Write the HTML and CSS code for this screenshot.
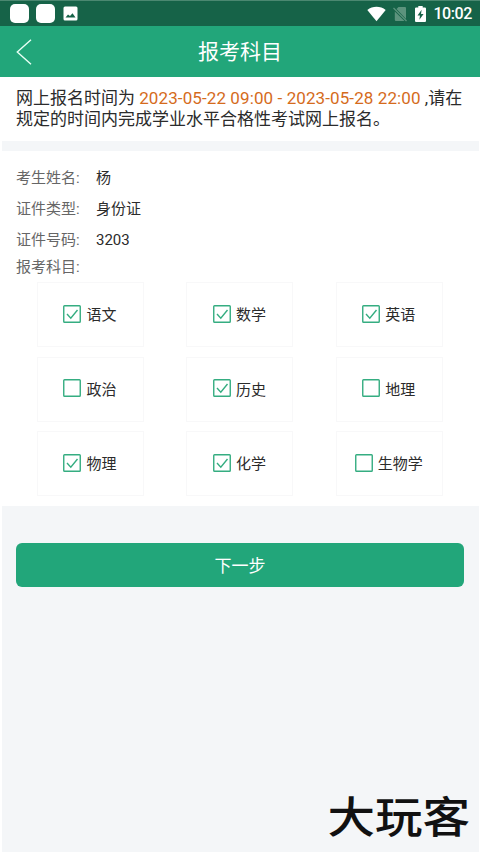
FILE: index.html
```html
<!DOCTYPE html>
<html lang="zh-CN">
<head>
<meta charset="utf-8">
<title>报考科目</title>
<link rel="stylesheet" href="styles.css">
</head>
<body>
<div class="status">
  <i class="app"></i><i class="app"></i>
  <svg class="photo" width="15" height="15" viewBox="0 0 15 15"><rect x=".5" y=".5" width="14" height="14" rx="1.5" fill="#fff"/><path d="M2.500 11.500L5 8.500l2 1.500 2.500-2.800 3 4.300z" fill="#166348"/></svg>
  <div class="tray">
    <svg width="19" height="16" viewBox="0 0 19 16"><path d="M.3 4C5.500-.2 13.500-.2 18.700 4L9.500 15.300z" fill="#fff"/></svg>
    <svg class="sim" width="14" height="16" viewBox="0 0 14 16"><path d="M5.500 1H12q1 0 1 1v11L3.500 3zM1.800 5.500L11.500 15H3q-1.200 0-1.200-1.200z" fill="#5c937d"/><path d="M.5 2l13 13" stroke="#5c937d" stroke-width="1.200"/></svg>
    <svg class="battery" width="11" height="16" viewBox="0 0 10 16" preserveAspectRatio="none"><path d="M3 0h4v1.500h2q1 0 1 1V15q0 1-1 1H1q-1 0-1-1V2.500q0-1 1-1h2z" fill="#fff"/><path d="M6 3.800L2.300 9.500h2.200L4 13.800 7.800 8H5.500z" fill="#166348"/></svg>
    <span class="clock">10:02</span>
  </div>
</div>
<header class="bar">
  <svg class="back" width="16" height="26" viewBox="0 0 16 26"><path d="M15 .8L1.300 13 15 25.200" fill="none" stroke="#e8fff5" stroke-width="1.400"/></svg>
  <h1>报考科目</h1>
</header>
<main>
  <p class="notice">网上报名时间为 <span class="period">2023-05-22 09:00 - 2023-05-28 22:00</span> ,请在<br>规定的时间内完成学业水平合格性考试网上报名。</p>
  <section class="form">
    <dl>
      <dt>考生姓名:</dt><dd>杨</dd>
      <dt>证件类型:</dt><dd>身份证</dd>
      <dt>证件号码:</dt><dd>3203</dd>
    </dl>
    <div class="label">报考科目:</div>
    <div class="subjects">
      <div class="subject"><svg class="box" viewBox="0 0 18 18"><rect x=".75" y=".75" width="16.500" height="16.500" rx=".8"/><path d="M4 9l3.800 4.200L14.500 5"/></svg>语文</div>
      <div class="subject"><svg class="box" viewBox="0 0 18 18"><rect x=".75" y=".75" width="16.500" height="16.500" rx=".8"/><path d="M4 9l3.800 4.200L14.500 5"/></svg>数学</div>
      <div class="subject"><svg class="box" viewBox="0 0 18 18"><rect x=".75" y=".75" width="16.500" height="16.500" rx=".8"/><path d="M4 9l3.800 4.200L14.500 5"/></svg>英语</div>
      <div class="subject"><svg class="box" viewBox="0 0 18 18"><rect x=".75" y=".75" width="16.500" height="16.500" rx=".8"/></svg>政治</div>
      <div class="subject"><svg class="box" viewBox="0 0 18 18"><rect x=".75" y=".75" width="16.500" height="16.500" rx=".8"/><path d="M4 9l3.800 4.200L14.500 5"/></svg>历史</div>
      <div class="subject"><svg class="box" viewBox="0 0 18 18"><rect x=".75" y=".75" width="16.500" height="16.500" rx=".8"/></svg>地理</div>
      <div class="subject"><svg class="box" viewBox="0 0 18 18"><rect x=".75" y=".75" width="16.500" height="16.500" rx=".8"/><path d="M4 9l3.800 4.200L14.500 5"/></svg>物理</div>
      <div class="subject"><svg class="box" viewBox="0 0 18 18"><rect x=".75" y=".75" width="16.500" height="16.500" rx=".8"/><path d="M4 9l3.800 4.200L14.500 5"/></svg>化学</div>
      <div class="subject"><svg class="box" viewBox="0 0 18 18"><rect x=".75" y=".75" width="16.500" height="16.500" rx=".8"/></svg>生物学</div>
    </div>
  </section>
  <button class="next">下一步</button>
</main>
<div class="mark">大玩客</div>
</body>
</html>
```
FILE: styles.css
```css
* { box-sizing: border-box; }
body {
  margin: 0;
  width: 480px;
  height: 853px;
  overflow: hidden;
  position: relative;
  display: flex;
  flex-direction: column;
  background: #fff;
  color: #2b2b2b;
  font-family: Roboto, "Noto Sans CJK SC", sans-serif;
}
svg { display: block; flex: none; }
.status {
  height: 26px;
  flex: none;
  display: flex;
  align-items: center;
  padding: 0 8px 0 10px;
  background: #166348;
  border-top: 1px solid #4b8871;
}
.app {
  width: 19px;
  height: 19px;
  margin-right: 7px;
  border-radius: 5px;
  background: #fff;
}
.photo { margin-left: 1px; }
.tray { margin-left: auto; display: flex; align-items: center; }
.sim { margin-left: 7px; }
.battery { margin-left: 8px; }
.clock {
  margin-left: 7px;
  color: #fff;
  font-size: 16px;
  line-height: 20px;
  font-weight: 500;
  letter-spacing: -.4px;
}
.bar {
  height: 51px;
  flex: none;
  display: grid;
  grid-template-columns: 16px 1fr 16px;
  align-items: center;
  padding: 0 16px;
  background: #22a67a;
}
.bar h1 {
  margin: 0;
  padding-top: 1px;
  text-align: center;
  color: #fff;
  font-size: 21px;
  line-height: 32px;
  font-weight: 400;
}
main {
  flex: 1;
  margin: 0 1px 1px 2px;
  background: #f4f6f8;
}
.notice {
  margin: 0;
  height: 64px;
  padding: 11px 0 0 14px;
  background: #fff;
  font-size: 17px;
  line-height: 20.500px;
  white-space: nowrap;
}
.period { color: #d56b1c; letter-spacing: .1px; }
.form {
  margin-top: 10px;
  height: 355px;
  padding: 12px 0 0 14px;
  background: #fff;
  font-size: 15px;
}
dl {
  margin: 0;
  display: grid;
  grid-template-columns: 80px 1fr;
  grid-auto-rows: 31px;
  line-height: 31px;
}
dt, .label { color: #666; }
dd { margin: 0; }
.label { line-height: 23px; }
.subjects {
  display: grid;
  grid-template-columns: repeat(3, 107px);
  grid-auto-rows: 65px;
  gap: 9.500px 42.400px;
  margin: 3px 0 0 21px;
}
.subject {
  display: flex;
  align-items: center;
  justify-content: center;
  gap: 5px;
  padding-right: 1px;
  padding-bottom: 2px;
  border: 1px solid #f8f8f9;
}
.box {
  width: 18px;
  height: 18px;
  fill: none;
  stroke: #35ad81;
  stroke-width: 1.400;
}
.next {
  display: block;
  width: 448px;
  height: 44px;
  margin: 37px 0 0 14px;
  padding: 0;
  border: 0;
  border-radius: 6px;
  background: #22a67a;
  color: #fff;
  font: inherit;
  font-size: 17px;
  line-height: 46px;
}
.mark {
  position: absolute;
  right: 10px;
  bottom: 10px;
  color: #111;
  font-size: 47.500px;
  line-height: 48px;
  font-weight: 500;
  transform: scaleY(.9);
}
```
